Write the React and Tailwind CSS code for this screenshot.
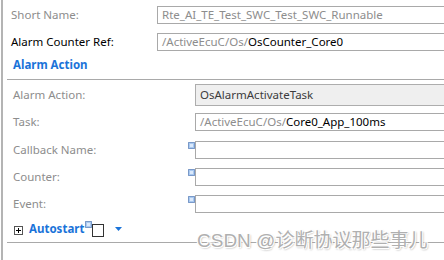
import React from 'react';

const labelGray = 'text-[#8d8d8d]';

const Deco = ({ className = '' }) => (
    <svg width="7" height="7" viewBox="0 0 7 7" className={className}>
        <rect x="0.5" y="0.5" width="6" height="6" fill="#a9c9f0" stroke="#1f4f9a" strokeDasharray="1 1" />
        <rect x="2" y="2" width="3" height="3" fill="#dbe9fb" />
    </svg>
);

const TextBox = ({ children, className = '' }) => (
    <div className={`h-[18px] flex-1 border border-[#a9a9a9] bg-white flex items-center pl-[4px] whitespace-nowrap overflow-hidden ${className}`}>
        {children}
    </div>
);

const SectionRow = ({ label, children, deco, className = '' }) => (
    <div className={`flex items-center ${className}`}>
        <div className={`w-[184px] pl-[10px] ${labelGray}`}>{label}</div>
        <div className="w-[8px] self-start flex">
            {deco && <Deco className="mt-[1px] ml-[1px]" />}
        </div>
        {children}
    </div>
);

const App = () => {
    return (
        <div
            className="relative w-[444px] h-[260px] bg-white overflow-hidden text-[11.5px] leading-none"
            style={{ fontFamily: '"Segoe UI", "Noto Sans", sans-serif' }}
        >
            <div className="ml-[1px] h-full border-l-2 border-[#b4b4b4] pt-[6px]">
                {/* top rows */}
                <div className="flex items-center">
                    <div className={`w-[154px] pl-[8px] ${labelGray}`}>Short Name:</div>
                    <TextBox className="mr-[-4px] text-[#8d8d8d]">Rte_AI_TE_Test_SWC_Test_SWC_Runnable</TextBox>
                </div>
                <div className="flex items-center mt-[9px]">
                    <div className="w-[154px] pl-[8px] text-black">Alarm Counter Ref:</div>
                    <TextBox className="mr-[-4px]">
                        <span className="text-[#8d8d8d]">/ActiveEcuC/Os/</span>
                        <span className="text-black">OsCounter_Core0</span>
                    </TextBox>
                </div>

                {/* section header */}
                <div className="ml-[4px] h-[29px] flex items-center border-b border-[#a9a9a9] pl-[6px]">
                    <span className="font-bold text-[#1a73d9]">Alarm Action</span>
                </div>

                <SectionRow label="Alarm Action:" className="mt-[4px]">
                    <div className="h-[22px] flex-1 mr-[-4px] border border-[#adadad] bg-[#efefef] flex items-center pl-[4px] text-[#3c3c3c]">
                        OsAlarmActivateTask
                    </div>
                </SectionRow>
                <SectionRow label="Task:" className="mt-[7px]">
                    <TextBox className="mr-[-4px]">
                        <span className="text-[#8d8d8d]">/ActiveEcuC/Os/</span>
                        <span className="text-black">Core0_App_100ms</span>
                    </TextBox>
                </SectionRow>
                <SectionRow label="Callback Name:" deco className="mt-[10px]">
                    <TextBox className="mr-[-4px]" />
                </SectionRow>
                <SectionRow label="Counter:" deco className="mt-[9px]">
                    <TextBox className="mr-[-4px]" />
                </SectionRow>
                <SectionRow label="Event:" deco className="mt-[9px]">
                    <TextBox className="mr-[-4px]" />
                </SectionRow>

                {/* autostart row */}
                <div className="flex items-center h-[18px] mt-[7px] pl-[11px]">
                    <div className="w-[9px] h-[9px] border border-[#555] flex items-center justify-center mt-[2px]">
                        <svg width="7" height="7" viewBox="0 0 7 7"><path d="M1 3.5h5M3.5 1v5" stroke="#000" strokeWidth="1" /></svg>
                    </div>
                    <span className="ml-[6px] font-bold text-[#1a73d9]">Autostart</span>
                    <Deco className="self-start ml-[1px] mt-[1px]" />
                    <div className="w-[12px] h-[13px] border border-[#333] bg-white mt-[2px]" />
                    <svg width="7" height="4" viewBox="0 0 7 4" className="ml-[11px]">
                        <path d="M0 0h7L3.5 4z" fill="#1a73d9" />
                    </svg>
                </div>

                <div className="ml-[4px] mt-[4px] border-t border-[#a9a9a9]" />
            </div>

            {/* watermark */}
            <div
                className="absolute left-[197px] top-[231px] text-[19px] leading-none text-[#b0b0b0] whitespace-nowrap"
                style={{
                    fontFamily: '"Liberation Sans", "Noto Sans CJK SC", sans-serif',
                    textShadow: '1px 1px 0 #fff, -1px -1px 0 #fff, 1px -1px 0 #fff, -1px 1px 0 #fff, 1px 1px 2px #888',
                }}
            >
                CSDN @诊断协议那些事儿
            </div>
        </div>
    );
};

export default App;
